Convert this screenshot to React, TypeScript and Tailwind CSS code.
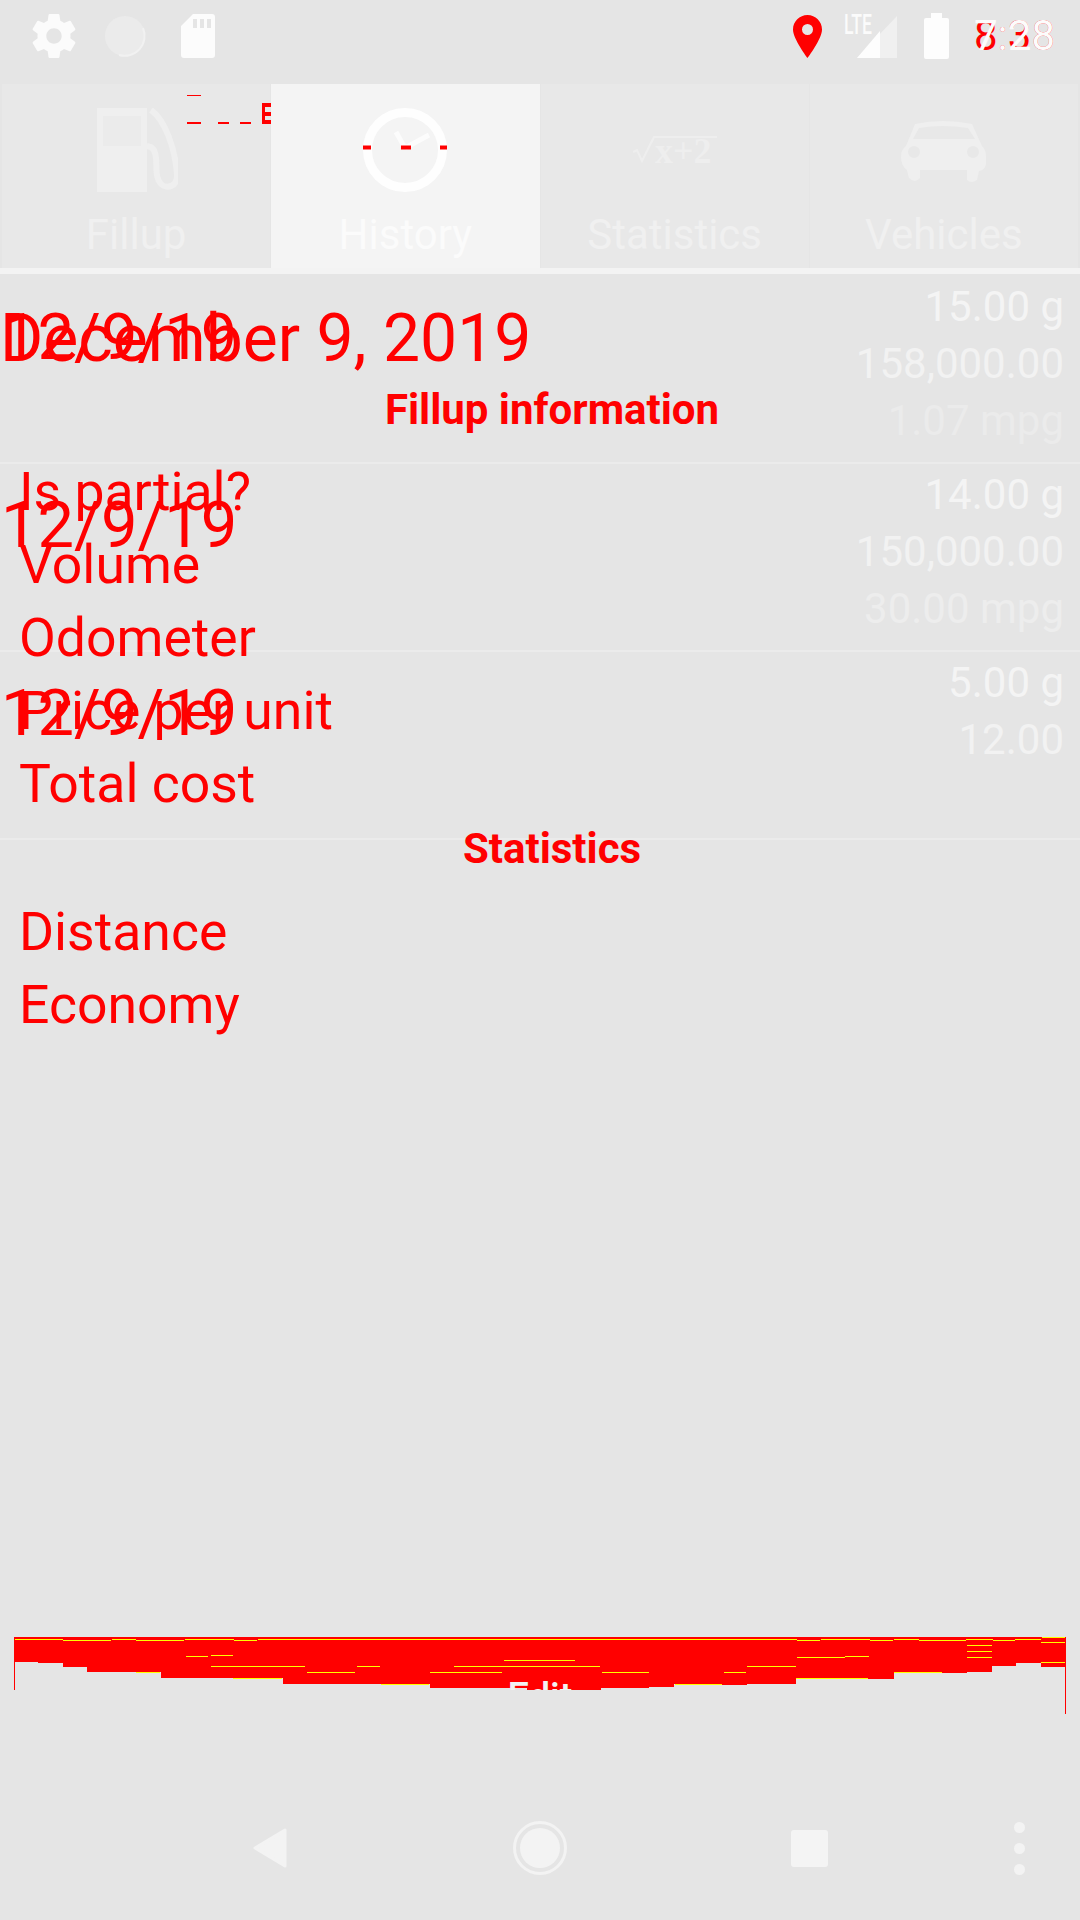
const rows = [
  { date: "12/9/19", values: ["15.00 g", "158,000.00", "1.07 mpg"], faint: "text-[#ebebeb]" },
  { date: "12/9/19", values: ["14.00 g", "150,000.00", "30.00 mpg"], faint: "text-[#ededed]" },
  { date: "12/9/19", values: ["5.00 g", "12.00"], faint: "text-[#ededed]" },
];

// bottom edge of the red band, [x start, x end, bottom y], band top is y 1637
const bandSteps = [
  [14, 38, 1662], [38, 63, 1663], [63, 87, 1667], [87, 161, 1672], [161, 283, 1678],
  [283, 430, 1684], [430, 527, 1688], [527, 601, 1690], [601, 649, 1688], [649, 674, 1687],
  [674, 722, 1684], [722, 747, 1685], [747, 796, 1684], [796, 894, 1679], [894, 942, 1672],
  [942, 967, 1673], [967, 992, 1672], [992, 1016, 1666], [1016, 1041, 1663], [1041, 1066, 1667],
];

// thin yellow streaks in the band, [x start, x end, y]
const bandStreaks = [
  [15, 63, 1639], [63, 111, 1640], [112, 136, 1639], [136, 184, 1640], [185, 234, 1639],
  [234, 257, 1640], [258, 797, 1639], [797, 820, 1640], [821, 870, 1639], [870, 893, 1640],
  [894, 919, 1639], [919, 966, 1640], [966, 993, 1639], [993, 1015, 1640], [1015, 1041, 1639],
  [1042, 1065, 1637], [1041, 1065, 1642], [1041, 1065, 1662],
  [186, 208, 1656], [211, 233, 1655], [797, 845, 1657], [845, 869, 1656],
  [967, 992, 1645], [967, 992, 1651], [967, 992, 1657], [504, 575, 1660],
  [211, 305, 1666], [357, 380, 1666], [454, 600, 1666], [747, 796, 1666],
  [136, 160, 1672], [307, 355, 1672], [430, 502, 1672], [602, 649, 1672], [724, 746, 1672], [894, 942, 1672],
  [233, 282, 1678], [796, 868, 1678], [381, 429, 1684], [675, 722, 1684],
];

function StatusBar() {
  return (
    <div className="flex h-[84px] shrink-0 items-center pb-[12px]">
      <svg viewBox="2 2 20 20" className="ml-[32px] h-[44px] w-[44px]" fill="#fbfbfb">
        <path d="M19.43 12.98c.04-.32.07-.64.07-.98s-.03-.66-.07-.98l2.11-1.65c.19-.15.24-.42.12-.64l-2-3.46c-.12-.22-.39-.3-.61-.22l-2.49 1c-.52-.4-1.08-.73-1.69-.98l-.38-2.65C14.46 2.18 14.25 2 14 2h-4c-.25 0-.46.18-.49.42l-.38 2.65c-.61.25-1.17.59-1.69.98l-2.49-1c-.23-.09-.49 0-.61.22l-2 3.46c-.13.22-.07.49.12.64l2.11 1.65c-.04.32-.07.65-.07.98s.03.66.07.98l-2.11 1.65c-.19.15-.24.42-.12.64l2 3.46c.12.22.39.3.61.22l2.49-1c.52.4 1.08.73 1.69.98l.38 2.65c.03.24.24.42.49.42h4c.25 0 .46-.18.49-.42l.38-2.65c.61-.25 1.17-.59 1.69-.98l2.49 1c.23.09.49 0 .61-.22l2-3.46c.12-.22.07-.49-.12-.64l-2.11-1.65zM12 15.5c-1.93 0-3.5-1.57-3.5-3.5s1.57-3.5 3.5-3.5 3.5 1.57 3.5 3.5-1.57 3.5-3.5 3.5z" />
      </svg>
      <svg viewBox="0 0 42 44" className="ml-[29px] h-[44px] w-[42px]">
        <circle cx="20" cy="22" r="20" fill="#ebebeb" />
        <path d="M38 14a20 20 0 0 1-24 27" fill="none" stroke="#f1f1f1" strokeWidth="2" />
      </svg>
      <svg viewBox="0 0 34 44" className="ml-[34px] h-[44px] w-[34px]">
        <path
          fillRule="evenodd"
          fill="#fcfcfc"
          d="M12 0H31a3 3 0 0 1 3 3V41a3 3 0 0 1-3 3H3a3 3 0 0 1-3-3V12ZM12 5v9h4V5ZM19 5v9h4V5ZM26 5v9h4V5Z"
        />
      </svg>
      <svg viewBox="0 0 29 43" className="ml-auto h-[43px] w-[29px] translate-x-[1px]">
        <path
          fillRule="evenodd"
          fill="#ff0000"
          d="M14.5 0C6.5 0 0 6.5 0 14.5 0 24 14.5 43 14.5 43S29 24 29 14.5C29 6.5 22.500 0 14.500 0ZM14.500 9a5.500 5.500 0 1 1 0 11 5.500 5.500 0 0 1 0-11Z"
        />
      </svg>
      <svg viewBox="0 0 53 44" className="ml-[23px] h-[44px] w-[53px]">
        <text
          x="0"
          y="20"
          textLength="28"
          lengthAdjust="spacingAndGlyphs"
          fill="#fbfbfb"
          fontFamily="Roboto, sans-serif"
          fontSize="27"
          fontWeight="500"
        >
          LTE
        </text>
        <path d="M13 44 53 2V44Z" fill="#f0f0f0" />
        <path d="M13 44 36 17V44Z" fill="#fdfdfd" />
      </svg>
      <svg viewBox="0 0 25 46" className="ml-[27px] h-[46px] w-[25px]" fill="#fdfdfd">
        <path d="M7 0H18V5H23a2 2 0 0 1 2 2V44a2 2 0 0 1-2 2H2a2 2 0 0 1-2-2V7a2 2 0 0 1 2-2H7Z" />
      </svg>
      {/* two times drawn over each other, as the reference has them */}
      <div className="relative ml-[25px] mr-[25px] text-[42px] leading-[42px]">
        <span className="text-[#ff0000]">8:38</span>
        <span className="absolute inset-0 text-[#fcfcfc]">7:28</span>
      </div>
    </div>
  );
}

function PumpIcon() {
  return (
    <svg viewBox="-3 0 84 84" className="h-[84px] w-[84px]">
      <path fill="#efefef" d="M0 0H50V84H0Z" />
      <path fill="#ebebeb" d="M6 8H44V38H6Z" />
      <path
        d="M54 2C68 12 78 40 80 66 81 78 70 82 64 76 58 70 60 60 59 50 58 42 56 39 50 38"
        fill="none"
        stroke="#efefef"
        strokeWidth="6"
      />
    </svg>
  );
}

function ClockIcon() {
  return (
    <svg viewBox="0 0 84 84" className="h-[84px] w-[84px]">
      <circle cx="42" cy="42" r="37.500" fill="none" stroke="#fefefe" strokeWidth="9" />
      <path d="M42 40 33 24M42 40 66 27" fill="none" stroke="#fcfcfc" strokeWidth="5" />
      <path d="M0 39.500H8M38 39.500H48M77 39.500H84" stroke="#ff0000" strokeWidth="4" />
    </svg>
  );
}

function RootIcon() {
  return (
    <svg viewBox="0 0 84 84" className="h-[84px] w-[84px]">
      <path d="M0 44 4 42 9 53 21 29H84" fill="none" stroke="#eeeeee" strokeWidth="2" />
      <text
        x="22"
        y="55"
        fill="#eeeeee"
        fontFamily="'Liberation Serif', serif"
        fontSize="36"
        fontWeight="700"
      >
        x+2
      </text>
    </svg>
  );
}

function CarIcon() {
  return (
    <svg viewBox="0 -10 85 84" className="h-[84px] w-[85px]">
      <path
        fillRule="evenodd"
        fill="#efefef"
        d="M14 6Q42 0 71 6L81 28Q85 32 85 38V46Q84 52 78 53L76 62Q70 66 66 62V52H19V60Q14 66 8 60L6 52Q0 48 0 38 0 32 5 28ZM18 10 12 21H74L67 10Q42 6 18 10ZM13 28a6 6 0 1 0 0 12 6 6 0 0 0 0-12ZM72 28a6 6 0 1 0 0 12 6 6 0 0 0 0-12Z"
      />
    </svg>
  );
}

const tabs = [
  { label: "Fillup", icon: <PumpIcon /> },
  { label: "History", icon: <ClockIcon />, active: true },
  { label: "Statistics", icon: <RootIcon /> },
  { label: "Vehicles", icon: <CarIcon /> },
];

function TabBar() {
  return (
    <div className="relative flex h-[190px] shrink-0 gap-px border-b-[6px] border-[#f3f3f3] px-[2px]">
      {tabs.map((t) => (
        <div
          key={t.label}
          className={`flex flex-1 flex-col items-center pt-[24px] ${
            t.active ? "bg-[#f4f4f4] text-[#fbfbfb]" : "bg-[#e8e8e8] text-[#f0f0f0]"
          }`}
        >
          {t.icon}
          <span className="mt-[18px] text-[42px] leading-[50px]">{t.label}</span>
        </div>
      ))}
      {/* red scraps left over the first tab */}
      <svg
        viewBox="0 0 84 30"
        className="absolute left-[187px] top-[11px] h-[30px] w-[84px]"
        fill="#ff0000"
      >
        <path d="M0 0H14V1H0ZM0 27H14V29H0ZM31 27H42V29H31ZM53 27H64V29H53ZM75 8H84V12H78V17H84V21H78V25H84V29H75Z" />
      </svg>
    </div>
  );
}

function HistoryList() {
  return (
    <div className="flex-1 pt-[2px]">
      {rows.map((r, i) => (
        <div key={i} className="flex h-[188px] justify-between border-b-2 border-[#ebebeb] pr-[16px]">
          <div className="pl-[1px] pt-[28px] text-[65px] leading-[66px] text-[#ff0000]">{r.date}</div>
          <div className="pt-[2px] text-right text-[42px] leading-[57px]">
            {r.values.map((v, j) => (
              <div
                key={v}
                className={j === 0 ? "text-[#f4f4f4]" : j === 1 ? "text-[#f2f2f2]" : r.faint}
              >
                {v}
              </div>
            ))}
          </div>
        </div>
      ))}
    </div>
  );
}

// the fillup dialog, painted over the list without a background of its own
function FillupDialog() {
  const section = "pl-[24px] text-center text-[42px] leading-[42px] font-bold";
  const label = "pl-[19px] text-[53.5px] leading-[73px]";
  return (
    <div className="absolute inset-x-0 top-[306px] text-[#ff0000]">
      <div className="text-[66px] leading-[66px]">December 9, 2019</div>
      <div className={`mt-[17px] ${section}`}>Fillup information</div>
      <div className="mt-[24px]">
        <div className={label}>Is partial?</div>
        <div className={label}>Volume</div>
        <div className={label}>Odometer</div>
        <div className={label}>Price per unit</div>
        <div className={label}>Total cost</div>
      </div>
      <div className={`mt-[8px] ${section}`}>Statistics</div>
      <div className="mt-[25px]">
        <div className={label}>Distance</div>
        <div className={label}>Economy</div>
      </div>
    </div>
  );
}

// torn remains of the dialog's Edit button
function EditBand() {
  const edge = [...bandSteps]
    .reverse()
    .map(([a, b, y]) => `L${b - 14} ${y - 1637}L${a - 14} ${y - 1637}`)
    .join("");
  return (
    <div className="absolute left-[14px] top-[1637px] h-[77px] w-[1052px]">
      <svg viewBox="0 0 1052 77" className="absolute inset-0 h-[77px] w-[1052px]">
        <path d={`M0 0H1052${edge}Z`} fill="#ff0000" />
        <path d="M0 0H1V53H0ZM1051 0H1052V77H1051Z" fill="#ff0000" />
        {bandStreaks.map(([a, b, y], i) => (
          <rect key={i} x={a - 14} y={y - 1637} width={b - a} height="1" fill="#ffff00" />
        ))}
      </svg>
      <div className="relative h-[53px] overflow-hidden">
        <div className="pt-[38px] text-center text-[38px] leading-[44px] font-medium text-[#f2f2f2]">
          Edit
        </div>
      </div>
    </div>
  );
}

function NavBar() {
  return (
    <div className="flex h-[144px] shrink-0 items-center pl-[135px]">
      <div className="flex w-[270px] justify-center">
        <svg viewBox="0 0 34 40" className="h-[40px] w-[34px]" fill="#f3f3f3" stroke="#f3f3f3" strokeLinejoin="round" strokeWidth="3">
          <path d="M32 2V38L2 20Z" />
        </svg>
      </div>
      <div className="flex w-[270px] justify-center">
        <svg viewBox="0 0 54 54" className="h-[54px] w-[54px]">
          <circle cx="27" cy="27" r="25.500" fill="none" stroke="#f3f3f3" strokeWidth="3" />
          <circle cx="27" cy="27" r="20" fill="#f3f3f3" />
        </svg>
      </div>
      <div className="flex w-[270px] -translate-x-[1px] justify-center">
        <div className="h-[37px] w-[37px] rounded-[3px] bg-[#f4f4f4]" />
      </div>
      <div className="ml-auto mr-[55px] flex flex-col gap-[10px]">
        <div className="h-[11px] w-[11px] rounded-full bg-[#f3f3f3]" />
        <div className="h-[11px] w-[11px] rounded-full bg-[#f3f3f3]" />
        <div className="h-[11px] w-[11px] rounded-full bg-[#f3f3f3]" />
      </div>
    </div>
  );
}

export default function App() {
  return (
    <div className="relative flex h-[1920px] w-[1080px] flex-col overflow-hidden bg-[#e5e5e5] font-['Roboto',sans-serif]">
      <StatusBar />
      <TabBar />
      <HistoryList />
      <NavBar />
      <FillupDialog />
      <EditBand />
    </div>
  );
}
